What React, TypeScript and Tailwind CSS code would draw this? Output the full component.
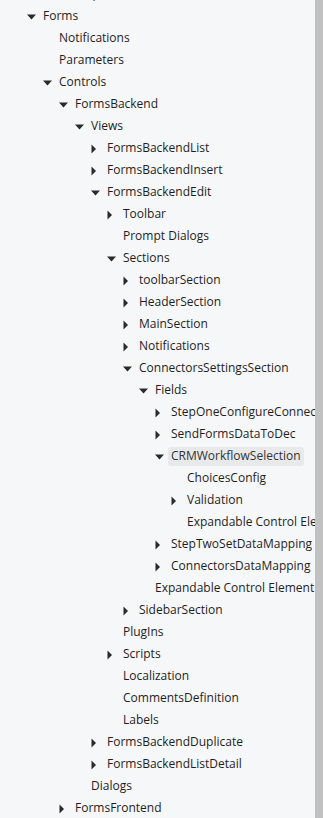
import React from "react";

type Row = { t: string; l: number; a?: "d" | "r"; sel?: boolean };

const rows: Row[] = [
  { t: "FormsImport", l: 0, a: "r" },
  { t: "Forms", l: 0, a: "d" },
  { t: "Notifications", l: 1 },
  { t: "Parameters", l: 1 },
  { t: "Controls", l: 1, a: "d" },
  { t: "FormsBackend", l: 2, a: "d" },
  { t: "Views", l: 3, a: "d" },
  { t: "FormsBackendList", l: 4, a: "r" },
  { t: "FormsBackendInsert", l: 4, a: "r" },
  { t: "FormsBackendEdit", l: 4, a: "d" },
  { t: "Toolbar", l: 5, a: "r" },
  { t: "Prompt Dialogs", l: 5 },
  { t: "Sections", l: 5, a: "d" },
  { t: "toolbarSection", l: 6, a: "r" },
  { t: "HeaderSection", l: 6, a: "r" },
  { t: "MainSection", l: 6, a: "r" },
  { t: "Notifications", l: 6, a: "r" },
  { t: "ConnectorsSettingsSection", l: 6, a: "d" },
  { t: "Fields", l: 7, a: "d" },
  { t: "StepOneConfigureConnectors", l: 8, a: "r" },
  { t: "SendFormsDataToDec", l: 8, a: "r" },
  { t: "CRMWorkflowSelection", l: 8, a: "d", sel: true },
  { t: "ChoicesConfig", l: 9 },
  { t: "Validation", l: 9, a: "r" },
  { t: "Expandable Control Element", l: 9 },
  { t: "StepTwoSetDataMapping", l: 8, a: "r" },
  { t: "ConnectorsDataMapping", l: 8, a: "r" },
  { t: "Expandable Control Element", l: 7 },
  { t: "SidebarSection", l: 6, a: "r" },
  { t: "PlugIns", l: 5 },
  { t: "Scripts", l: 5, a: "r" },
  { t: "Localization", l: 5 },
  { t: "CommentsDefinition", l: 5 },
  { t: "Labels", l: 5 },
  { t: "FormsBackendDuplicate", l: 4, a: "r" },
  { t: "FormsBackendListDetail", l: 4, a: "r" },
  { t: "Dialogs", l: 3 },
  { t: "FormsFrontend", l: 2, a: "r" },
];

function Caret({ a }: { a?: "d" | "r" }) {
  return (
    <span className="w-4 h-[22px] shrink-0 flex items-center pl-1">
      {a === "d" && (
        <svg width="10" height="6" viewBox="0 0 10 6" className="mt-[1px]">
          <polygon points="0,0.5 9,0.5 4.5,5.5" fill="#2a2a2a" />
        </svg>
      )}
      {a === "r" && (
        <svg width="6" height="10" viewBox="0 0 6 10" className="mt-[2px]">
          <polygon points="0.5,0.5 5,5 0.5,9.5" fill="#2a2a2a" />
        </svg>
      )}
    </span>
  );
}

export default function App() {
  return (
    <div
      className="w-[323px] h-[818px] overflow-hidden flex bg-[#f6f7f9]"
      style={{ fontFamily: '"Open Sans", sans-serif' }}
    >
      <div className="w-[315px] h-full overflow-hidden">
        <div className="-mt-[17px] flex flex-col">
          {rows.map((r, i) => (
            <div
              key={i}
              className="h-[22px] flex items-center whitespace-nowrap"
              style={{ paddingLeft: 23 + 16 * r.l }}
            >
              <Caret a={r.a} />
              <span
                className={
                  r.sel
                    ? "ml-[1px] px-[3px] h-[19px] flex items-center rounded-[3px] bg-[#e8e9eb] text-[12px] text-[#333]"
                    : "ml-1 text-[12px] text-[#1e1e1e]"
                }
              >
                {r.t}
              </span>
            </div>
          ))}
        </div>
      </div>
      <div className="w-2 h-full bg-[#c1c1c1]" />
    </div>
  );
}
